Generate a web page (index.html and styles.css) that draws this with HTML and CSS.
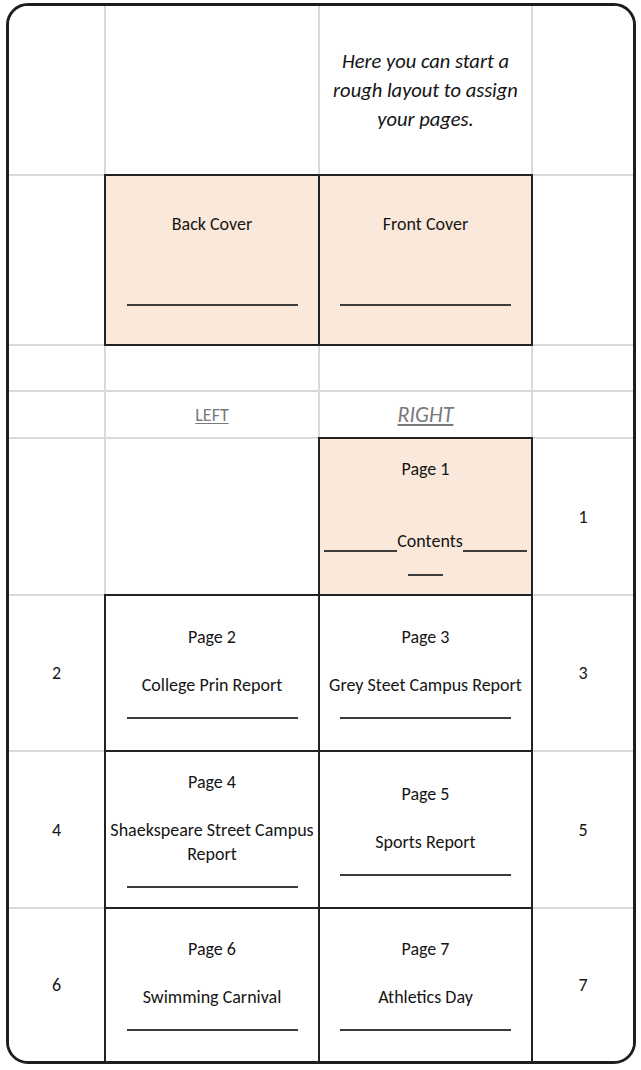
FILE: index.html
```html
<!DOCTYPE html>
<html lang="en">
<head>
<meta charset="utf-8">
<title>Page layout planner</title>
<link rel="stylesheet" href="styles.css">
</head>
<body>
<div class="sheet">
  <div class="cell"></div>
  <div class="cell"></div>
  <div class="cell note">Here you can start a<br>rough layout to assign<br>your pages.</div>
  <div class="cell"></div>

  <div class="cell"></div>
  <div class="cell box cover">
    <div class="ln">Back Cover</div><div class="ln"></div><div class="ln"></div><div class="rule"></div>
  </div>
  <div class="cell box cover">
    <div class="ln">Front Cover</div><div class="ln"></div><div class="ln"></div><div class="rule"></div>
  </div>
  <div class="cell"></div>

  <div class="cell"></div>
  <div class="cell"></div>
  <div class="cell"></div>
  <div class="cell"></div>

  <div class="cell"></div>
  <div class="cell side left">LEFT</div>
  <div class="cell side right">RIGHT</div>
  <div class="cell"></div>

  <div class="cell"></div>
  <div class="cell"></div>
  <div class="cell box cover">
    <div class="ln">Page 1</div><div class="ln"></div><div class="ln"></div>
    <div class="ln"><span class="us w73"></span>Contents<span class="us w64"></span></div>
    <div class="ln"><span class="us w35"></span></div>
  </div>
  <div class="cell num">1</div>

  <div class="cell num">2</div>
  <div class="cell box">
    <div class="ln">Page 2</div><div class="ln"></div><div class="ln">College Prin Report</div><div class="rule"></div>
  </div>
  <div class="cell box">
    <div class="ln">Page 3</div><div class="ln"></div><div class="ln">Grey Steet Campus Report</div><div class="rule"></div>
  </div>
  <div class="cell num">3</div>

  <div class="cell num">4</div>
  <div class="cell box">
    <div class="ln">Page 4</div><div class="ln"></div><div class="ln">Shaekspeare Street Campus</div><div class="ln">Report</div><div class="rule"></div>
  </div>
  <div class="cell box">
    <div class="ln">Page 5</div><div class="ln"></div><div class="ln">Sports Report</div><div class="rule"></div>
  </div>
  <div class="cell num">5</div>

  <div class="cell num">6</div>
  <div class="cell box">
    <div class="ln">Page 6</div><div class="ln"></div><div class="ln">Swimming Carnival</div><div class="rule"></div>
  </div>
  <div class="cell box">
    <div class="ln">Page 7</div><div class="ln"></div><div class="ln">Athletics Day</div><div class="rule"></div>
  </div>
  <div class="cell num">7</div>
</div>
</body>
</html>
```
FILE: styles.css
```css
html, body {
  margin: 0;
  padding: 0;
  background: #ffffff;
}

body {
  font-family: Carlito, Lato, "Liberation Sans", sans-serif;
  font-size: 18px;
  color: #151515;
}

.sheet {
  margin: 3px 0 0 6px;
  width: 630px;
  box-sizing: border-box;
  border: 3px solid #1e1e1e;
  border-radius: 22px;
  overflow: hidden;
  display: grid;
  grid-template-columns: 95px 212px 211px 100px;
  grid-template-rows: 168px 168px 44px 45px 155px 154px 155px 152px;
  gap: 2px;
  background: #dadada;
}

.cell {
  background: #ffffff;
  display: flex;
  flex-direction: column;
  align-items: center;
  justify-content: center;
  text-align: center;
  white-space: nowrap;
}

.box {
  box-shadow: 0 0 0 2px #222222;
}

.cover {
  background: #fae9db;
}

.ln {
  height: 24px;
  line-height: 24px;
}

.rule {
  width: 171px;
  height: 20px;
  border-bottom: 2px solid #3c3c3c;
  margin-bottom: 2px;
}

.us {
  display: inline-block;
  height: 0;
  border-bottom: 2px solid #3c3c3c;
  vertical-align: -5px;
}

.w73 { width: 73px; }
.w64 { width: 64px; }
.w35 { width: 35px; }

.note {
  font-style: italic;
  font-size: 20.5px;
  line-height: 29px;
}

.side {
  color: #7a7a7a;
  text-decoration: underline;
  text-underline-offset: 2px;
}

.left {
  font-size: 18px;
}

.right {
  font-size: 22px;
  font-style: italic;
}

.num {
  font-size: 18px;
}
```
